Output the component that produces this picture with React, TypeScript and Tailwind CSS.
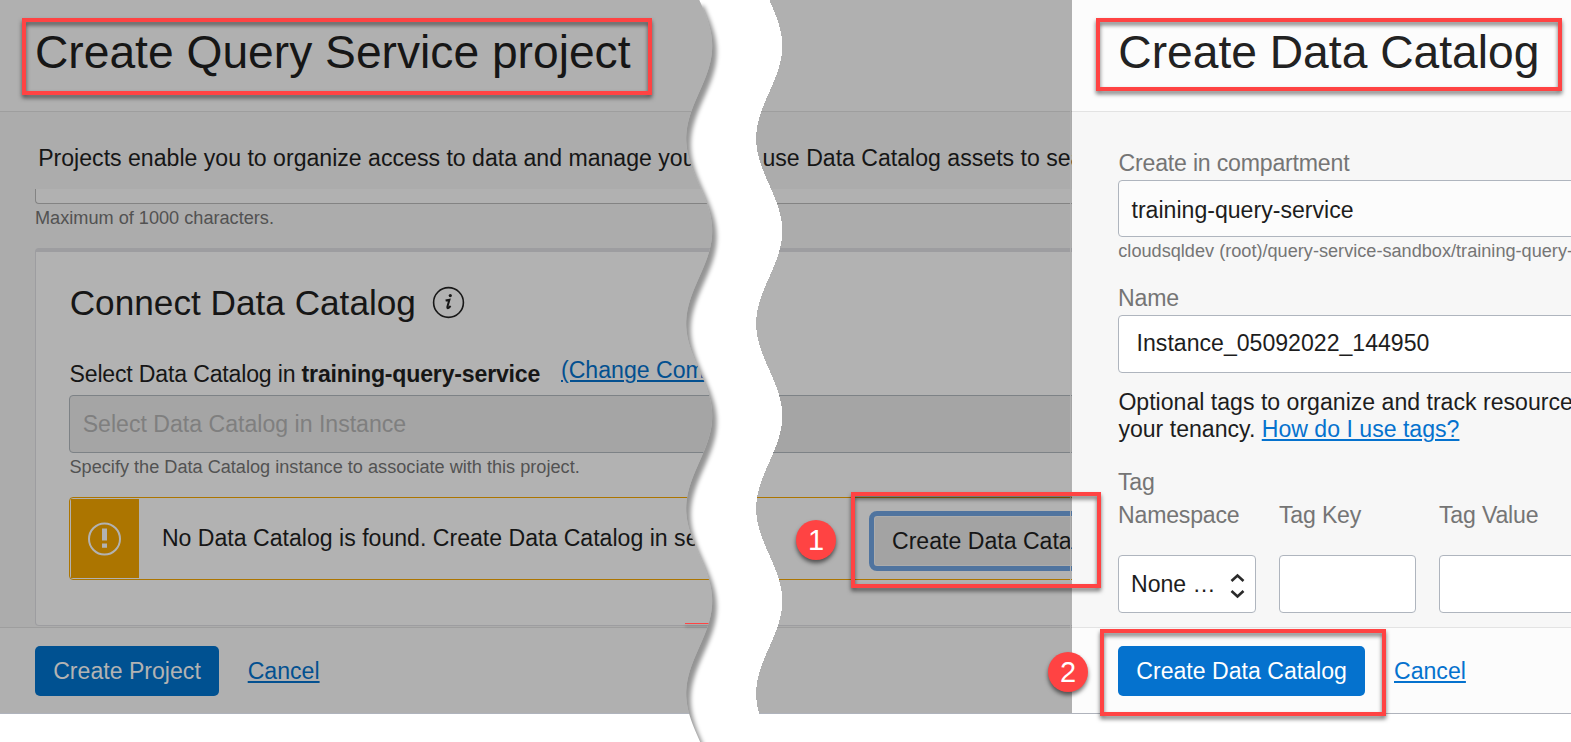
import type { ReactNode } from "react";

const HEIGHT = 742;

function wavePoints(center: number): string[] {
  const points: string[] = [];
  for (let y = -20; y <= HEIGHT + 20; y += 2) {
    const x = center - 13 * Math.cos((2 * Math.PI * (y - 138.5)) / 185);
    points.push(`${x.toFixed(2)},${y}`);
  }
  return points;
}

const leftWave = wavePoints(699.2);
const rightWave = [...wavePoints(769.2)].reverse();
const tearPath = `M${leftWave.join("L")}L${rightWave.join("L")}Z`;
const gapPath = `M${wavePoints(703).join("L")}L${rightWave.join("L")}Z`;
const leftSheetPath = `M640,0L${leftWave.slice(10).join("L")}L640,${HEIGHT + 20}Z`;

function Tear() {
  return (
    <svg className="pointer-events-none absolute left-0 top-0" width="1071" height="742" viewBox="0 0 1071 742">
      <defs>
        <clipPath id="tear">
          <path d={tearPath} />
        </clipPath>
        <filter id="soft" x="-20%" y="-5%" width="140%" height="110%">
          <feGaussianBlur stdDeviation="2" />
        </filter>
      </defs>
      <path d={gapPath} fill="#fff" shapeRendering="crispEdges" />
      <g clipPath="url(#tear)">
        <rect x="670" y="0" width="60" height="742" fill="#fff" />
        <path d={leftSheetPath} transform="translate(4.5 6)" fill="#000" fillOpacity="0.42" filter="url(#soft)" />
      </g>
    </svg>
  );
}

function Link({ children, className = "" }: { children: ReactNode; className?: string }) {
  return (
    <a className={`underline decoration-2 underline-offset-2 ${className}`}>{children}</a>
  );
}

function Highlight({ className }: { className: string }) {
  return (
    <div
      className={`pointer-events-none absolute border-4 border-[#ff4343] drop-shadow-[0_3px_2px_rgba(0,0,0,0.55)] ${className}`}
    />
  );
}

function Step({ n, className }: { n: number; className: string }) {
  return (
    <div
      className={`absolute flex size-10 items-center justify-center rounded-full bg-[#ff4343] text-[29px] leading-10 text-white shadow-[0_3px_4px_rgba(0,0,0,0.55)] ${className}`}
    >
      {n}
    </div>
  );
}

function InfoIcon() {
  return (
    <svg width="33" height="33" viewBox="0 0 33 33" fill="none" stroke="#181818">
      <circle cx="16.5" cy="16.5" r="14.9" strokeWidth="1.6" />
      <circle cx="18.3" cy="9.6" r="1.6" fill="#181818" stroke="none" />
      <path d="M13.6 14.6 L17.4 13.8 L15.4 20.8 Q15.1 22.7 16.6 21.9 L18.6 20.1" strokeWidth="2" />
    </svg>
  );
}

function WarningIcon() {
  return (
    <svg width="34" height="34" viewBox="0 0 34 34" fill="none">
      <circle cx="16.5" cy="17" r="15.5" stroke="#b2b2b2" strokeWidth="2" />
      <path d="M14 6.5h5v12h-5zM14 21.5h5v4.3h-5z" fill="#b2b2b2" />
    </svg>
  );
}

function ProjectPanel() {
  return (
    <section className="relative flex w-[1072px] shrink-0 flex-col overflow-hidden bg-[#acacac] text-[#161616]">
      <header className="h-[112px] shrink-0 border-b border-[#9e9e9e] bg-[#b0b0b0] pl-[35px] pt-6">
        <h1 className="text-[46.2px] leading-[56px]">Create Query Service project</h1>
      </header>
      <div className="h-[515px] shrink-0 overflow-hidden">
        <p className="mt-8 flex pl-[38.2px] leading-7">
          <span className="w-[724.3px] shrink-0">Projects enable you to organize access to data and manage you</span>
          <span>use Data Catalog assets to sea</span>
        </p>
        <div className="ml-[35px] mt-[17px] h-[15px] w-[1100px] rounded-bl border-b border-l border-[#838383] bg-[#b1b1b1]" />
        <p className="ml-[35px] mt-0.5 text-[18.15px] leading-6 text-[#525252]">Maximum of 1000 characters.</p>
        <div className="ml-[35px] mt-[18px] h-[378px] w-[1100px] rounded border border-t-4 border-[#9d9da0] bg-[#b2b2b2] pl-[33px]">
          <div className="mt-[29px] flex h-11">
            <h2 className="w-[363px] pl-[0.7px] text-[35.2px] leading-[44px]">Connect Data Catalog</h2>
            <div className="mt-[5px]">
              <InfoIcon />
            </div>
          </div>
          <div className="mt-[31px] flex h-8">
            <p className="w-[492px] shrink-0 pl-[0.5px] pt-1 leading-7 tracking-[-0.18px]">
              Select Data Catalog in <b>training-query-service</b>
            </p>
            <Link className="leading-7 text-[#035090]">(Change Com</Link>
          </div>
          <div className="mt-[7px] h-[58px] rounded border border-[#7d8286] bg-[#a5a5a5] pl-[12.7px] pt-3.5 leading-7 text-[#7f7f7f]">
            Select Data Catalog in Instance
          </div>
          <p className="mt-0.5 pl-[0.5px] text-[18.15px] leading-6 text-[#525252]">
            Specify the Data Catalog instance to associate with this project.
          </p>
          <div className="mt-[18px] flex h-[83px] rounded border border-[#ac7500] p-px">
            <div className="flex w-[68px] shrink-0 items-center justify-center bg-[#ac7500]">
              <WarningIcon />
            </div>
            <p className="w-[730px] shrink-0 pl-[22.9px] pt-[25px] leading-7">
              No Data Catalog is found. Create Data Catalog in se
            </p>
            <button className="mt-3 h-[60px] w-[260px] shrink-0 rounded-lg border-[5px] border-[#50749f] bg-[#a3a3a3] pb-px pl-[18px] text-left leading-7 shadow-[inset_0_0_0_1px_#acacac]">
              Create Data Catalog
            </button>
          </div>
        </div>
      </div>
      <footer className="flex h-[86px] shrink-0 border-t border-[#9e9e9e] bg-[#b0b0b0] pl-[35px] pt-[18px]">
        <button className="h-[50px] w-[184px] rounded-[5px] bg-[#005191] pl-[18.2px] text-left leading-[50px] text-[#b3b3b3]">
          Create Project
        </button>
        <Link className="ml-[28.7px] leading-[50px] text-[#035090]">Cancel</Link>
      </footer>
      <div className="absolute right-px top-0 h-full w-px bg-[#b0b0b0]" />
    </section>
  );
}

function CatalogPanel() {
  return (
    <section className="flex w-[499px] shrink-0 flex-col overflow-hidden bg-[#f7f7f7] text-[#1d1d1d]">
      <header className="h-[112px] shrink-0 border-b border-[#e3e3e3] bg-[#fcfcfc] pl-[46.3px] pt-6">
        <h1 className="text-[46.2px] leading-[56px] text-[#222]">Create Data Catalog</h1>
      </header>
      <div className="h-[515px] shrink-0 overflow-hidden pl-[46px]">
        <p className="mt-[37px] pl-[0.5px] leading-7 tracking-[-0.19px] text-[#757575]">Create in compartment</p>
        <div className="mt-[3px] h-[57px] w-[480px] rounded border border-[#afb5be] bg-[#fcfcfc] pl-[12.5px] pt-[15px] leading-7">
          training-query-service
        </div>
        <p className="mt-0.5 pl-[0.3px] text-[18.15px] leading-6 text-[#757575]">
          cloudsqldev (root)/query-service-sandbox/training-query-
        </p>
        <p className="mt-[21px] leading-7 tracking-[-0.19px] text-[#757575]">Name</p>
        <div className="mt-[3px] h-[58px] w-[480px] rounded border border-[#afb5be] bg-white pl-[17.6px] pt-[13px] leading-7">
          Instance_05092022_144950
        </div>
        <div className="mt-[15.5px] h-[54px] pl-[0.4px] leading-[27px]">
          <p>Optional tags to organize and track resource</p>
          <p>
            your tenancy. <Link className="text-[#0572ce]">How do I use tags?</Link>
          </p>
        </div>
        <p className="mt-[25.5px] leading-7 tracking-[-0.19px] text-[#757575]">Tag</p>
        <div className="mt-[5px] flex leading-7 tracking-[-0.19px] text-[#757575]">
          <span className="w-[161px] shrink-0">Namespace</span>
          <span className="w-40 shrink-0">Tag Key</span>
          <span className="shrink-0">Tag Value</span>
        </div>
        <div className="mt-[26px] flex h-[58px] w-[600px]">
          <div className="flex w-[138px] shrink-0 rounded border border-[#afb5be] bg-white pl-3">
            <span className="w-[99px] pt-3.5 leading-7">None …</span>
            <svg className="mt-[17px]" width="16" height="26" viewBox="0 0 16 26" fill="none" stroke="#2a2a2a" strokeWidth="2.6">
              <path d="M1.5 8 L7.5 2.5 L13.5 8 M1.5 18 L7.5 23.5 L13.5 18" />
            </svg>
          </div>
          <div className="ml-[23px] w-[137px] shrink-0 rounded border border-[#afb5be] bg-white" />
          <div className="ml-[23px] w-[137px] shrink-0 rounded border border-[#afb5be] bg-white" />
        </div>
      </div>
      <footer className="flex h-[86px] shrink-0 border-t border-[#e3e3e3] bg-[#fcfcfc] pl-[46px] pt-[18px]">
        <button className="h-[50px] w-[247px] rounded-[5px] bg-[#0572ce] pl-[18.3px] text-left leading-[50px] text-white">
          Create Data Catalog
        </button>
        <Link className="ml-[29px] leading-[50px] text-[#0572ce]">Cancel</Link>
      </footer>
    </section>
  );
}

export default function App() {
  return (
    <main className="relative h-[742px] w-[1571px] overflow-hidden whitespace-nowrap bg-white font-['Liberation_Sans',Arial,sans-serif] text-[23.1px]">
      <div className="flex h-[714px] border-b border-[#afb3bc]">
        <ProjectPanel />
        <CatalogPanel />
      </div>
      <div className="absolute left-[685px] top-[623px] h-px w-[40px] bg-[#ff4343] shadow-[0_3px_3px_rgba(0,0,0,0.35)]" />
      <Tear />
      <Highlight className="left-[22px] top-[18px] h-[77px] w-[630px]" />
      <Highlight className="left-[1096px] top-[18px] h-[73px] w-[466px]" />
      <Highlight className="left-[851px] top-[492px] h-[96px] w-[250px]" />
      <Highlight className="left-[1100px] top-[629px] h-[87px] w-[286px]" />
      <Step n={1} className="left-[796px] top-[520px]" />
      <Step n={2} className="left-[1048px] top-[652px]" />
    </main>
  );
}
